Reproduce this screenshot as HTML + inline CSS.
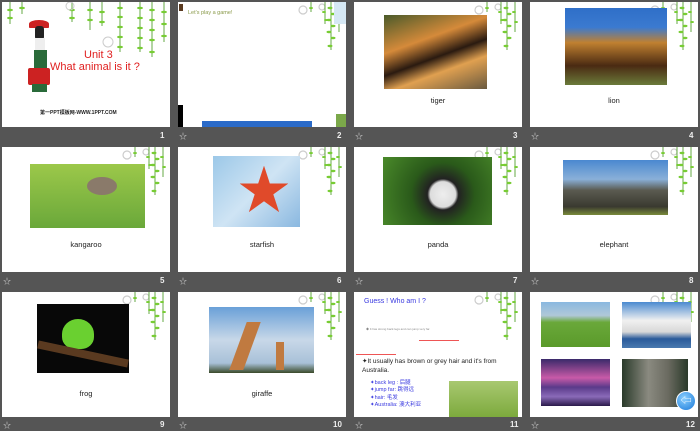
<!DOCTYPE html>
<html><head><meta charset="utf-8">
<style>
*{margin:0;padding:0;box-sizing:border-box}
body{width:700px;height:431px;background:#555;position:relative;overflow:hidden;font-family:"Comic Sans MS","Liberation Sans","Noto Sans CJK SC",sans-serif}
.s{position:absolute;width:168px;height:125px;background:#fff;overflow:hidden}
.n{position:absolute;color:#eee;font-size:8px;font-weight:bold;font-family:"Liberation Sans",sans-serif}
.st{position:absolute;color:#ccc;font-size:8px}
.a{position:absolute}
.l{position:absolute;width:168px;text-align:center;font-size:7.5px;color:#222}
.v{position:absolute;top:0;right:4px;width:45px;height:55px}
</style></head><body>
<svg width="0" height="0" style="position:absolute"><defs>
<g id="vine">
<circle cx="6" cy="8" r="4" fill="none" stroke="#ccc" stroke-width="1.2"/>
<circle cx="25" cy="5" r="3" fill="none" stroke="#ccc" stroke-width="1.2"/>
<path d="M14 0v10M34 0v48M42 0v30M28 0v22" stroke="#6a4" stroke-width="1" fill="none"/>
<g fill="#7c3"><ellipse cx="14" cy="6" rx="2" ry="1"/><ellipse cx="33" cy="6" rx="2.5" ry="1.2"/><ellipse cx="36" cy="12" rx="2.5" ry="1.2"/><ellipse cx="32" cy="18" rx="2.5" ry="1.2"/><ellipse cx="36" cy="24" rx="2.5" ry="1.2"/><ellipse cx="32" cy="30" rx="2.5" ry="1.2"/><ellipse cx="36" cy="36" rx="2.5" ry="1.2"/><ellipse cx="33" cy="44" rx="2.5" ry="1.2"/><ellipse cx="41" cy="10" rx="2" ry="1"/><ellipse cx="43" cy="20" rx="2" ry="1"/><ellipse cx="27" cy="10" rx="2" ry="1"/><ellipse cx="29" cy="18" rx="2" ry="1"/></g>
</g></defs></svg>

<!-- Slide 1 -->
<div class="s" style="left:2px;top:2px">
<svg class="a" style="left:0;top:0" width="168" height="75">
<g stroke="#6a4" stroke-width="1" fill="none"><path d="M8 0v22M20 0v12M70 0v20M88 0v28M100 0v24M118 0v50M138 0v50M150 0v55M162 0v40"/></g>
<g fill="#7c3">
<ellipse cx="8" cy="8" rx="3" ry="1.3"/><ellipse cx="8" cy="16" rx="3" ry="1.3"/><ellipse cx="20" cy="6" rx="3" ry="1.3"/><ellipse cx="70" cy="8" rx="3" ry="1.3"/><ellipse cx="70" cy="16" rx="3" ry="1.3"/><ellipse cx="88" cy="8" rx="3" ry="1.3"/><ellipse cx="88" cy="18" rx="3" ry="1.3"/><ellipse cx="100" cy="10" rx="3" ry="1.3"/><ellipse cx="100" cy="20" rx="3" ry="1.3"/>
<ellipse cx="118" cy="6" rx="3" ry="1.3"/><ellipse cx="118" cy="15" rx="3" ry="1.3"/><ellipse cx="118" cy="25" rx="3" ry="1.3"/><ellipse cx="118" cy="35" rx="3" ry="1.3"/><ellipse cx="118" cy="45" rx="3" ry="1.3"/>
<ellipse cx="138" cy="6" rx="3" ry="1.3"/><ellipse cx="138" cy="16" rx="3" ry="1.3"/><ellipse cx="138" cy="26" rx="3" ry="1.3"/><ellipse cx="138" cy="36" rx="3" ry="1.3"/><ellipse cx="138" cy="46" rx="3" ry="1.3"/>
<ellipse cx="150" cy="8" rx="3" ry="1.3"/><ellipse cx="150" cy="18" rx="3" ry="1.3"/><ellipse cx="150" cy="28" rx="3" ry="1.3"/><ellipse cx="150" cy="38" rx="3" ry="1.3"/><ellipse cx="150" cy="50" rx="3" ry="1.3"/>
<ellipse cx="162" cy="10" rx="3" ry="1.3"/><ellipse cx="162" cy="22" rx="3" ry="1.3"/><ellipse cx="162" cy="34" rx="3" ry="1.3"/></g>
<circle cx="68" cy="4" r="4" fill="none" stroke="#ccc"/><circle cx="106" cy="40" r="5" fill="none" stroke="#ccc"/>
</svg>
<div class="a" style="left:27px;top:18px;width:20px;height:8px;background:#c22;border-radius:50% 50% 10% 10%"></div>
<div class="a" style="left:33px;top:24px;width:9px;height:14px;background:#222;border-radius:3px"></div>
<div class="a" style="left:33px;top:36px;width:10px;height:12px;background:#eee"></div>
<div class="a" style="left:32px;top:48px;width:13px;height:18px;background:#2a6b3a"></div>
<div class="a" style="left:26px;top:66px;width:22px;height:17px;background:#c22;border-radius:2px"></div>
<div class="a" style="left:30px;top:82px;width:15px;height:8px;background:#2a6b3a"></div>
<div class="a" style="left:82px;top:47px;color:#e02020;font-size:11px">Unit 3</div>
<div class="a" style="left:48px;top:59px;color:#e02020;font-size:11px;white-space:nowrap">What animal is it ?</div>
<div class="a" style="left:38px;top:107px;color:#222;font-size:5px;font-weight:bold;font-family:'Liberation Sans','Noto Sans CJK SC',sans-serif">第一PPT模板网-WWW.1PPT.COM</div>
</div>
<div class="n" style="left:160px;top:131px">1</div>

<!-- Slide 2 -->
<div class="s" style="left:178px;top:2px">
<svg class="v" viewBox="0 0 45 55"><use href="#vine"/></svg>
<div class="a" style="right:0;top:0;width:12px;height:22px;background:#d6e8f4"></div>
<div class="a" style="left:1px;top:2px;width:4px;height:7px;background:#5a3a20"></div>
<div class="a" style="left:10px;top:8px;color:#8a9a4a;font-size:5.5px">Let's play a game!</div>
<div class="a" style="left:0;top:103px;width:5px;height:22px;background:#000"></div>
<div class="a" style="left:24px;top:119px;width:110px;height:6px;background:#2a6ac8"></div>
<div class="a" style="right:0;top:112px;width:10px;height:13px;background:#7ba84a"></div>
</div>
<div class="st" style="left:179px;top:131px">☆</div><div class="n" style="left:337px;top:131px">2</div>

<!-- Slide 3 -->
<div class="s" style="left:354px;top:2px">
<svg class="v" viewBox="0 0 45 55"><use href="#vine"/></svg>
<div class="a" style="left:30px;top:13px;width:103px;height:74px;background:linear-gradient(160deg,#4a5a2a 0%,#d58a3a 35%,#2a1a10 55%,#e0a050 70%,#6a5a40 100%)"></div>
<div class="l" style="top:94px">tiger</div>
</div>
<div class="st" style="left:355px;top:131px">☆</div><div class="n" style="left:513px;top:131px">3</div>

<!-- Slide 4 -->
<div class="s" style="left:530px;top:2px">
<svg class="v" viewBox="0 0 45 55"><use href="#vine"/></svg>
<div class="a" style="left:35px;top:6px;width:102px;height:77px;background:linear-gradient(180deg,#2f6fc8 0%,#3b7ad0 25%,#c08030 45%,#4a2a12 75%,#6a7a3a 100%)"></div>
<div class="l" style="top:94px">lion</div>
</div>
<div class="st" style="left:531px;top:131px">☆</div><div class="n" style="left:689px;top:131px">4</div>

<!-- Slide 5 -->
<div class="s" style="left:2px;top:147px">
<svg class="v" viewBox="0 0 45 55"><use href="#vine"/></svg>
<div class="a" style="left:28px;top:17px;width:115px;height:64px;background:linear-gradient(180deg,#9cc84a,#6aa83a)"></div>
<div class="a" style="left:85px;top:30px;width:30px;height:18px;background:#8a7a6a;border-radius:50%"></div>
<div class="l" style="top:93px">kangaroo</div>
</div>
<div class="st" style="left:3px;top:276px">☆</div><div class="n" style="left:160px;top:276px">5</div>

<!-- Slide 6 -->
<div class="s" style="left:178px;top:147px">
<svg class="v" viewBox="0 0 45 55"><use href="#vine"/></svg>
<div class="a" style="left:35px;top:9px;width:87px;height:71px;background:linear-gradient(135deg,#9cc8e8,#cfe4f4 50%,#8ab8e0)"></div>
<div class="a" style="left:60px;top:25px;color:#e04a2a;font-size:52px;line-height:40px">★</div>
<div class="l" style="top:93px">starfish</div>
</div>
<div class="st" style="left:179px;top:276px">☆</div><div class="n" style="left:337px;top:276px">6</div>

<!-- Slide 7 -->
<div class="s" style="left:354px;top:147px">
<svg class="v" viewBox="0 0 45 55"><use href="#vine"/></svg>
<div class="a" style="left:29px;top:10px;width:109px;height:68px;background:radial-gradient(circle at 55% 55%,#eee 0,#ddd 18%,#222 22%,#2a5a1a 45%,#4a8a2a 100%)"></div>
<div class="l" style="top:93px">panda</div>
</div>
<div class="st" style="left:355px;top:276px">☆</div><div class="n" style="left:513px;top:276px">7</div>

<!-- Slide 8 -->
<div class="s" style="left:530px;top:147px">
<svg class="v" viewBox="0 0 45 55"><use href="#vine"/></svg>
<div class="a" style="left:33px;top:13px;width:105px;height:55px;background:linear-gradient(180deg,#4a88d0 0%,#8ab0d8 35%,#5a5a50 55%,#3a3a30 85%,#7a8a3a 100%)"></div>
<div class="l" style="top:93px">elephant</div>
</div>
<div class="st" style="left:531px;top:276px">☆</div><div class="n" style="left:689px;top:276px">8</div>

<!-- Slide 9 -->
<div class="s" style="left:2px;top:292px">
<svg class="v" viewBox="0 0 45 55"><use href="#vine"/></svg>
<div class="a" style="left:35px;top:12px;width:92px;height:69px;background:#080808"></div>
<div class="a" style="left:60px;top:27px;width:32px;height:30px;background:#6ad030;border-radius:50% 50% 40% 40%"></div>
<div class="a" style="left:35px;top:58px;width:92px;height:8px;background:#5a3a20;transform:rotate(12deg)"></div>
<div class="l" style="top:97px">frog</div>
</div>
<div class="st" style="left:3px;top:420px">☆</div><div class="n" style="left:160px;top:420px">9</div>

<!-- Slide 10 -->
<div class="s" style="left:178px;top:292px">
<svg class="v" viewBox="0 0 45 55"><use href="#vine"/></svg>
<div class="a" style="left:31px;top:15px;width:105px;height:66px;background:linear-gradient(180deg,#6aa0d8,#c8d8e8 50%,#a8c0d8 85%,#3a4a2a)"></div>
<div class="a" style="left:60px;top:30px;width:14px;height:48px;background:#c07a40;transform:skewX(-20deg)"></div>
<div class="a" style="left:98px;top:50px;width:8px;height:28px;background:#c07a40"></div>
<div class="l" style="top:97px">giraffe</div>
</div>
<div class="st" style="left:179px;top:420px">☆</div><div class="n" style="left:333px;top:420px">10</div>

<!-- Slide 11 -->
<div class="s" style="left:354px;top:292px">
<svg class="v" viewBox="0 0 45 55"><use href="#vine"/></svg>
<div class="a" style="left:10px;top:6px;color:#3a3ae0;font-size:7px">Guess ! Who am I ?</div>
<div class="a" style="left:12px;top:35px;color:#888;font-size:3px;white-space:nowrap">◆ It has strong back legs and can jump very far.</div>
<div class="a" style="left:65px;top:48px;width:40px;height:1px;background:#e55"></div>
<div class="a" style="left:2px;top:62px;width:40px;height:1px;background:#e55"></div>
<div class="a" style="left:8px;top:65px;color:#222;font-size:6.5px;line-height:9px;width:160px">✦It usually has brown or grey hair and it's from Australia.</div>
<div class="a" style="left:16px;top:88px;color:#3a3ae0;font-size:5.5px;line-height:7.3px;font-family:'Comic Sans MS','Liberation Sans','Noto Sans CJK SC',sans-serif">✦back leg : 后腿<br>✦jump far: 跳得远<br>✦hair: 毛发<br>✦Australia: 澳大利亚</div>
<div class="a" style="left:95px;top:89px;width:69px;height:38px;background:linear-gradient(180deg,#a8c870,#7aa83a)"></div>
</div>
<div class="st" style="left:355px;top:420px">☆</div><div class="n" style="left:510px;top:420px">11</div>

<!-- Slide 12 -->
<div class="s" style="left:530px;top:292px">
<svg class="v" viewBox="0 0 45 55"><use href="#vine"/></svg>
<div class="a" style="left:11px;top:10px;width:69px;height:45px;background:linear-gradient(180deg,#8ab8e0 0%,#b0c8d8 30%,#6aa83a 45%,#5a9a2a 100%)"></div>
<div class="a" style="left:92px;top:10px;width:69px;height:46px;background:linear-gradient(180deg,#4a8ad0 0%,#f0f0f0 40%,#d8d8d8 65%,#2a5a9a 80%,#4a7ab0 100%)"></div>
<div class="a" style="left:11px;top:67px;width:69px;height:47px;background:linear-gradient(180deg,#3a2a6a 0%,#c85aa8 40%,#5a3a8a 60%,#8a6ab8 80%,#2a1a4a 100%)"></div>
<div class="a" style="left:92px;top:67px;width:66px;height:48px;background:linear-gradient(90deg,#2a3a2a,#8a8a80 40%,#6a6a60 70%,#2a3a2a)"></div>
<div class="a" style="left:146px;top:99px;width:20px;height:20px;border-radius:50%;background:radial-gradient(circle at 40% 35%,#8ad0ff,#1a78d8);border:1px solid #fff;color:#fff;font-size:11px;line-height:18px;text-align:center">⇦</div>
</div>
<div class="st" style="left:531px;top:420px">☆</div><div class="n" style="left:686px;top:420px">12</div>
</body></html>
